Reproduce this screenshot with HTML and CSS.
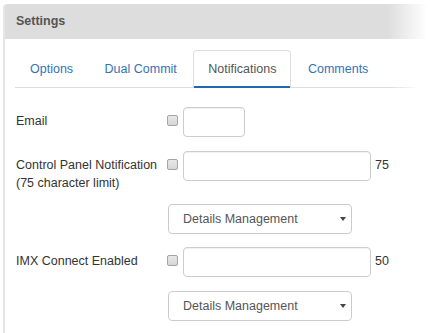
FILE: index.html
```html
<!DOCTYPE html>
<html>
<head>
<meta charset="utf-8">
<link rel="stylesheet" href="styles.css">
</head>
<body>
<div class="panel">
  <div class="panel-heading">Settings</div>
  <div class="panel-body">
    <ul class="tabs">
      <li class="tab">Options</li>
      <li class="tab">Dual Commit</li>
      <li class="tab active">Notifications</li>
      <li class="tab">Comments</li>
    </ul>
    <div class="form">
      <div class="row row-email">
        <div class="label">Email</div>
        <span class="cb"></span>
        <div class="input input-short"></div>
      </div>
      <div class="row row-cpn">
        <div class="label">Control Panel Notification<br>(75 character limit)</div>
        <span class="cb"></span>
        <div class="input input-long"></div>
        <span class="count">75</span>
      </div>
      <div class="row row-select1">
        <div class="select"><span>Details Management</span><span class="caret"></span></div>
      </div>
      <div class="row row-imx">
        <div class="label">IMX Connect Enabled</div>
        <span class="cb"></span>
        <div class="input input-long"></div>
        <span class="count">50</span>
      </div>
      <div class="row row-select2">
        <div class="select"><span>Details Management</span><span class="caret"></span></div>
      </div>
    </div>
  </div>
</div>
</body>
</html>
```
FILE: styles.css
```css
html, body {
  margin: 0;
  padding: 0;
  background: #fff;
  overflow: hidden;
}
body {
  font-family: "Liberation Sans", Arial, sans-serif;
  font-size: 12.5px;
  color: #333;
}
.panel {
  margin: 4px 0 0 3px;
  border-left: 2px solid #e6e6e6;
  border-top-left-radius: 4px;
  min-height: 329px;
  width: 427px;
}
.panel-heading {
  height: 35px;
  line-height: 35px;
  padding-left: 11px;
  font-weight: bold;
  color: #555;
  background: linear-gradient(to right, #dddddd 0, #dddddd 382px, #ffffff 422px);
  border-top-left-radius: 3px;
}
.panel-body {
  padding-left: 10px;
}
.tabs {
  list-style: none;
  margin: 11px 0 0 0;
  padding: 0;
  display: flex;
  height: 38px;
  background: linear-gradient(to right, #dddddd 0, #dddddd 375px, rgba(221,221,221,0) 405px) left bottom / 100% 1px no-repeat;
}
.tab {
  box-sizing: border-box;
  height: 38px;
  line-height: 37px;
  padding: 0 14px;
  border: 1px solid transparent;
  border-bottom: 0;
  margin-right: 1.5px;
  color: #3273b8;
}
.tab.active {
  color: #555;
  background: #fff;
  border-color: #dddddd;
  border-radius: 4px 4px 0 0;
  box-shadow: inset 0 -2px 0 #2168b0;
}
.form {
  padding-top: 19px;
}
.row {
  display: flex;
  align-items: flex-start;
}
.row-email { margin-bottom: 14px; }
.row-cpn { margin-bottom: 12px; }
.row-select1 { margin-bottom: 13px; }
.row-imx { margin-bottom: 14px; }
.label {
  box-sizing: border-box;
  width: 152px;
  padding: 5px 0 0 1px;
  line-height: 18px;
  color: #333;
}
.cb {
  box-sizing: border-box;
  width: 11px;
  height: 11px;
  margin-top: 8px;
  border: 1px solid #a5a5a5;
  border-radius: 2px;
  background: linear-gradient(#e8e8e8, #d6d6d6);
}
.input {
  box-sizing: border-box;
  height: 30px;
  margin-left: 5px;
  border: 1px solid #cccccc;
  border-radius: 4px;
  background: #fff;
  box-shadow: inset 0 1px 1px rgba(0,0,0,0.06);
}
.input-short { width: 62px; }
.input-long { width: 188px; }
.count {
  margin-left: 4px;
  line-height: 29px;
  color: #333;
}
.row-select1, .row-select2 {
  padding-left: 153px;
}
.select {
  box-sizing: border-box;
  width: 184px;
  height: 30px;
  border: 1px solid #cccccc;
  border-radius: 4px;
  padding: 0 5px 0 14px;
  display: flex;
  align-items: center;
  justify-content: space-between;
  color: #555;
  background: #fff;
}
.caret {
  width: 0;
  height: 0;
  border-left: 3px solid transparent;
  border-right: 3px solid transparent;
  border-top: 4px solid #444;
}
```
